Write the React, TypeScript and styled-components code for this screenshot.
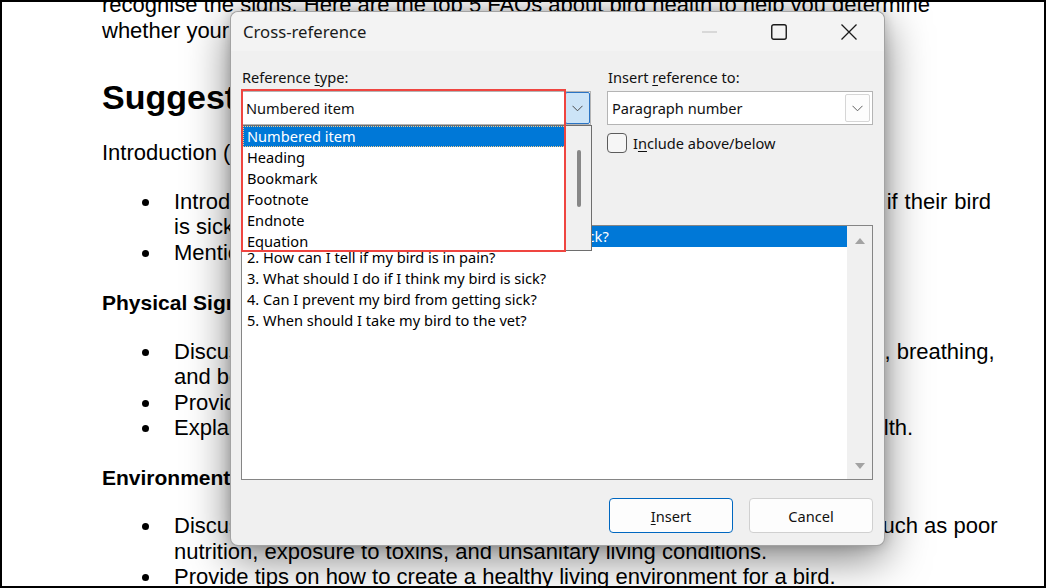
import React from "react";
import styled, { createGlobalStyle } from "styled-components";

const Global = createGlobalStyle`
  html, body { margin: 0; padding: 0; background: #fff; }
  body { overflow: hidden; }
`;

const Frame = styled.div`
  position: relative;
  width: 1046px;
  height: 588px;
  box-sizing: border-box;
  border: 2px solid #000;
  background: #fff;
  overflow: hidden;
`;

/* ---------- document ---------- */
const Doc = styled.div`
  margin-top: -10px;
  padding-left: 100px;
  font-family: "Liberation Sans", Arial, sans-serif;
  font-size: 22px;
  line-height: 25.5px;
  color: #000;
`;

const P = styled.div<{ $mt?: number }>`
  margin-top: ${(p) => p.$mt ?? 0}px;
  white-space: nowrap;
`;

const H1 = styled.div<{ $mt: number }>`
  margin-top: ${(p) => p.$mt}px;
  font-size: 34px;
  line-height: 40px;
  font-weight: 700;
  white-space: nowrap;
`;

const H2 = styled.div<{ $mt: number }>`
  margin-top: ${(p) => p.$mt}px;
  font-size: 21px;
  font-weight: 700;
  white-space: nowrap;
`;

const List = styled.div<{ $mt: number }>`
  margin-top: ${(p) => p.$mt}px;
  display: flex;
  flex-direction: column;
`;

const Item = styled.div`
  display: flex;
`;

const Marker = styled.div`
  flex: none;
  width: 72px;
  &::before {
    content: "";
    display: block;
    width: 7px;
    height: 7px;
    border-radius: 50%;
    background: #000;
    margin: 10px 0 0 40px;
  }
`;

const ItemText = styled.div`
  display: flex;
  flex-direction: column;
`;

const Line = styled.div<{ $w?: number }>`
  white-space: ${(p) => (p.$w ? "normal" : "nowrap")};
  width: ${(p) => (p.$w ? `${p.$w}px` : "auto")};
  text-align: ${(p) => (p.$w ? "justify" : "left")};
  text-align-last: ${(p) => (p.$w ? "justify" : "auto")};
`;

/* ---------- dialog ---------- */
const Dialog = styled.div`
  position: absolute;
  left: 228px;
  top: 9px;
  width: 655px;
  box-sizing: border-box;
  border: 1px solid rgba(0, 0, 0, 0.32);
  border-radius: 8px;
  background: #f0f0f0;
  box-shadow: 0 12px 44px rgba(0, 0, 0, 0.5), 0 0 12px rgba(0, 0, 0, 0.18);
  font-family: "Noto Sans", "Open Sans", sans-serif;
  font-size: 14.6px;
  color: #111;
`;

const TitleBar = styled.div`
  height: 39px;
  display: flex;
  align-items: center;
  background: #f3f3f3;
  border-radius: 8px 8px 0 0;
`;

const Title = styled.div`
  flex: 1;
  padding-left: 12px;
  font-size: 16.7px;
  color: #1a1a1a;
`;

const TitleBtn = styled.div`
  width: 70px;
  height: 39px;
  display: flex;
  align-items: center;
  justify-content: center;
`;

const Body = styled.div`
  padding: 16px 11px 12px 10px;
  display: flex;
  flex-direction: column;
`;

const TopGrid = styled.div`
  display: grid;
  grid-template-columns: 350px 266px;
  column-gap: 16px;
`;

const Col = styled.div`
  display: flex;
  flex-direction: column;
`;

const Label = styled.div<{ $mt?: number; $mb?: number }>`
  height: 20px;
  line-height: 20px;
  margin: ${(p) => p.$mt ?? 0}px 0 ${(p) => p.$mb ?? 4}px 1px;
  white-space: nowrap;
`;

const U = styled.span`
  text-decoration: underline;
  text-underline-offset: 2px;
`;

const ComboWrap = styled.div`
  position: relative;
`;

const Combo = styled.div`
  height: 34px;
  box-sizing: border-box;
  border: 1px solid #b4b4b4;
  background: #fff;
  display: flex;
  align-items: center;
  padding-left: 4px;
  padding-right: 1px;
`;

const ComboText = styled.div`
  flex: 1;
  white-space: nowrap;
`;

const ComboBtn = styled.div<{ $open?: boolean }>`
  width: 25px;
  height: ${(p) => (p.$open ? 32 : 28)}px;
  box-sizing: border-box;
  display: flex;
  align-items: center;
  justify-content: center;
  border-radius: 2px;
  border: 1px solid ${(p) => (p.$open ? "#2a74c4" : "#d6d6d6")};
  background: ${(p) => (p.$open ? "#cce4f7" : "#fdfdfd")};
  margin-right: ${(p) => (p.$open ? -1 : 1)}px;
`;

const DropList = styled.div`
  position: absolute;
  left: 0;
  top: 34px;
  width: 351px;
  height: 126px;
  box-sizing: border-box;
  border: 1px solid #6e6e6e;
  background: #fff;
  display: flex;
  z-index: 2;
`;

const DropItems = styled.div`
  flex: 1;
  overflow: hidden;
  padding-left: 1px;
`;

const DropItem = styled.div<{ $sel?: boolean }>`
  height: 21px;
  line-height: 19px;
  box-sizing: border-box;
  padding-left: 3px;
  white-space: nowrap;
  background: ${(p) => (p.$sel ? "#0078d7" : "transparent")};
  color: ${(p) => (p.$sel ? "#fff" : "#000")};
  border: 1px dotted ${(p) => (p.$sel ? "#f4c98a" : "transparent")};
`;

const DropScroll = styled.div`
  width: 25px;
  background: #f0f0f0;
  display: flex;
  justify-content: center;
  padding-top: 24px;
  box-sizing: border-box;
`;

const Thumb = styled.div`
  width: 4px;
  height: 57px;
  border-radius: 2px;
  background: #878787;
`;

const Highlight = styled.div`
  position: absolute;
  left: 0;
  top: -2px;
  width: 325px;
  height: 163px;
  box-sizing: border-box;
  border: 2px solid #ef4540;
  z-index: 3;
  pointer-events: none;
`;

const CheckRow = styled.div`
  margin-top: 8px;
  height: 20px;
  display: flex;
  align-items: center;
  gap: 6px;
  white-space: nowrap;
`;

const Box = styled.div`
  width: 20px;
  height: 20px;
  box-sizing: border-box;
  border: 1px solid #5c5c5c;
  border-radius: 4px;
  background: #f6f6f6;
`;

const ListBox = styled.div`
  margin-top: 2px;
  height: 255px;
  box-sizing: border-box;
  border: 1px solid #858585;
  background: #fff;
  display: flex;
`;

const ListItems = styled.div`
  flex: 1;
`;

const ListItem = styled.div<{ $sel?: boolean }>`
  height: 21px;
  line-height: 21px;
  padding-left: 5px;
  white-space: nowrap;
  background: ${(p) => (p.$sel ? "#0078d7" : "transparent")};
  color: ${(p) => (p.$sel ? "#fff" : "#000")};
`;

const VScroll = styled.div`
  width: 25px;
  background: #f0f0f0;
  display: flex;
  flex-direction: column;
  align-items: center;
  justify-content: space-between;
  padding: 12px 0 10px;
  box-sizing: border-box;
`;

const ButtonRow = styled.div`
  margin-top: 18px;
  display: flex;
  justify-content: flex-end;
  gap: 16px;
`;

const Button = styled.div<{ $default?: boolean }>`
  width: 124px;
  height: 35px;
  box-sizing: border-box;
  border: 1px solid ${(p) => (p.$default ? "#0067c0" : "#d0d0d0")};
  border-radius: 4px;
  background: #fdfdfd;
  display: flex;
  align-items: center;
  justify-content: center;
`;

const Chevron = ({ color = "#606060" }: { color?: string }) => (
  <svg width="11" height="7" viewBox="0 0 11 7">
    <polyline points="0.5,0.8 5.5,5.8 10.5,0.8" fill="none" stroke={color} strokeWidth="1" />
  </svg>
);

const Tri = ({ up }: { up?: boolean }) => (
  <svg width="10" height="6" viewBox="0 0 10 6">
    <polygon points={up ? "0,6 5,0 10,6" : "0,0 10,0 5,6"} fill="#a3a3a3" />
  </svg>
);

export default function App() {
  return (
    <>
      <Global />
      <Frame>
        <Doc>
          <P>recognise the signs. Here are the top 5 FAQs about bird health to help you determine</P>
          <P>whether your bird is sick or healthy.</P>
          <H1 $mt={34}>Suggested Outline</H1>
          <P $mt={23}>Introduction (100-150 words)</P>
          <List $mt={23}>
            <Item>
              <Marker />
              <ItemText>
                <Line $w={817}>Introduce the topic of bird health and the importance of owners knowing if their bird</Line>
                <Line>is sick.</Line>
              </ItemText>
            </Item>
            <Item>
              <Marker />
              <ItemText>
                <Line>Mention the top 5 FAQs that will be covered in the article.</Line>
              </ItemText>
            </Item>
          </List>
          <H2 $mt={25}>Physical Signs of Illness (200-250 words)</H2>
          <List $mt={23}>
            <Item>
              <Marker />
              <ItemText>
                <Line>Discuss the physical signs of illness in birds, such as changes in appetite, breathing,</Line>
                <Line>and behaviour.</Line>
              </ItemText>
            </Item>
            <Item>
              <Marker />
              <ItemText>
                <Line>Provide examples of specific symptoms to look out for.</Line>
              </ItemText>
            </Item>
            <Item>
              <Marker />
              <ItemText>
                <Line>Explain the importance of regular check-ups with a vet for your bird's health.</Line>
              </ItemText>
            </Item>
          </List>
          <H2 $mt={24}>Environmental Factors (200-250 words)</H2>
          <List $mt={23}>
            <Item>
              <Marker />
              <ItemText>
                <Line>Discuss the environmental factors that can contribute to a bird's illness, such as poor</Line>
                <Line>nutrition, exposure to toxins, and unsanitary living conditions.</Line>
              </ItemText>
            </Item>
            <Item>
              <Marker />
              <ItemText>
                <Line>Provide tips on how to create a healthy living environment for a bird.</Line>
              </ItemText>
            </Item>
          </List>
        </Doc>

        <Dialog>
          <TitleBar>
            <Title>Cross-reference</Title>
            <TitleBtn>
              <svg width="15" height="2" viewBox="0 0 15 2">
                <line x1="0" y1="1" x2="15" y2="1" stroke="#bdbdbd" strokeWidth="1" />
              </svg>
            </TitleBtn>
            <TitleBtn>
              <svg width="16" height="16" viewBox="0 0 16 16">
                <rect x="0.75" y="0.75" width="14.5" height="14.5" rx="2" fill="none" stroke="#1a1a1a" strokeWidth="1.4" />
              </svg>
            </TitleBtn>
            <TitleBtn>
              <svg width="16" height="16" viewBox="0 0 16 16">
                <path d="M0.5 0.5 L15.5 15.5 M15.5 0.5 L0.5 15.5" stroke="#1a1a1a" strokeWidth="1.3" />
              </svg>
            </TitleBtn>
          </TitleBar>
          <Body>
            <TopGrid>
              <Col>
                <Label>
                  Reference <U>t</U>ype:
                </Label>
                <ComboWrap>
                  <Combo>
                    <ComboText>Numbered item</ComboText>
                    <ComboBtn $open>
                      <Chevron color="#4a4a4a" />
                    </ComboBtn>
                  </Combo>
                  <DropList>
                    <DropItems>
                      <DropItem $sel>Numbered item</DropItem>
                      <DropItem>Heading</DropItem>
                      <DropItem>Bookmark</DropItem>
                      <DropItem>Footnote</DropItem>
                      <DropItem>Endnote</DropItem>
                      <DropItem>Equation</DropItem>
                      <DropItem>Figure</DropItem>
                    </DropItems>
                    <DropScroll>
                      <Thumb />
                    </DropScroll>
                  </DropList>
                  <Highlight />
                </ComboWrap>
                <CheckRow>
                  <Box />
                  Insert as hyperlink
                </CheckRow>
              </Col>
              <Col>
                <Label>
                  Insert <U>r</U>eference to:
                </Label>
                <Combo>
                  <ComboText>Paragraph number</ComboText>
                  <ComboBtn>
                    <Chevron />
                  </ComboBtn>
                </Combo>
                <CheckRow>
                  <Box />
                  <span>
                    I<U>n</U>clude above/below
                  </span>
                </CheckRow>
              </Col>
            </TopGrid>
            <Label $mt={50} $mb={0}>
              For which numbered item:
            </Label>
            <ListBox>
              <ListItems>
                <ListItem $sel>1. What are some common signs that my bird is sick?</ListItem>
                <ListItem>2. How can I tell if my bird is in pain?</ListItem>
                <ListItem>3. What should I do if I think my bird is sick?</ListItem>
                <ListItem>4. Can I prevent my bird from getting sick?</ListItem>
                <ListItem>5. When should I take my bird to the vet?</ListItem>
              </ListItems>
              <VScroll>
                <Tri up />
                <Tri />
              </VScroll>
            </ListBox>
            <ButtonRow>
              <Button $default>
                <span>
                  <U>I</U>nsert
                </span>
              </Button>
              <Button>Cancel</Button>
            </ButtonRow>
          </Body>
        </Dialog>
      </Frame>
    </>
  );
}
